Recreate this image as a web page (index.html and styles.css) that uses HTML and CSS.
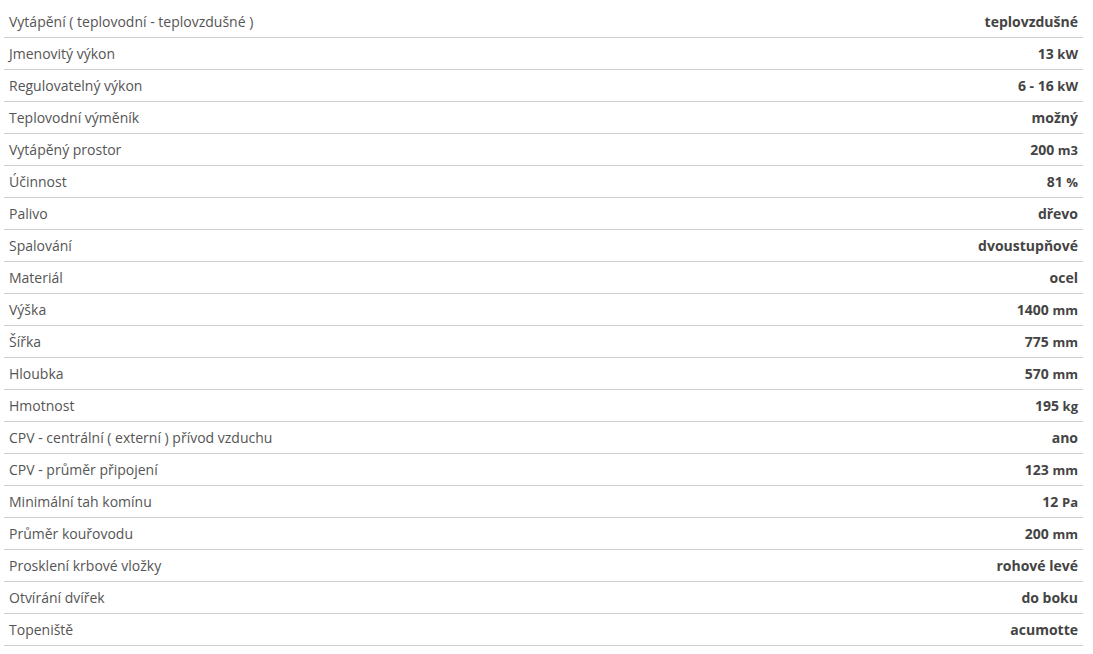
FILE: index.html
```html
<!DOCTYPE html>
<html lang="cs">
<head>
<meta charset="utf-8">
<link rel="stylesheet" href="styles.css">
</head>
<body>
<table class="params">
<tbody>
<tr><td class="name">Vytápění ( teplovodní - teplovzdušné )</td><td class="val">teplovzdušné</td></tr>
<tr><td class="name">Jmenovitý výkon</td><td class="val">13 <span class="unit">kW</span></td></tr>
<tr><td class="name">Regulovatelný výkon</td><td class="val">6 - 16 <span class="unit">kW</span></td></tr>
<tr><td class="name">Teplovodní výměník</td><td class="val">možný</td></tr>
<tr><td class="name">Vytápěný prostor</td><td class="val">200 <span class="unit">m3</span></td></tr>
<tr><td class="name">Účinnost</td><td class="val">81 <span class="unit">%</span></td></tr>
<tr><td class="name">Palivo</td><td class="val">dřevo</td></tr>
<tr><td class="name">Spalování</td><td class="val">dvoustupňové</td></tr>
<tr><td class="name">Materiál</td><td class="val">ocel</td></tr>
<tr><td class="name">Výška</td><td class="val">1400 <span class="unit">mm</span></td></tr>
<tr><td class="name">Šířka</td><td class="val">775 <span class="unit">mm</span></td></tr>
<tr><td class="name">Hloubka</td><td class="val">570 <span class="unit">mm</span></td></tr>
<tr><td class="name">Hmotnost</td><td class="val">195 <span class="unit">kg</span></td></tr>
<tr><td class="name">CPV - centrální ( externí ) přívod vzduchu</td><td class="val">ano</td></tr>
<tr><td class="name">CPV - průměr připojení</td><td class="val">123 <span class="unit">mm</span></td></tr>
<tr><td class="name">Minimální tah komínu</td><td class="val">12 <span class="unit">Pa</span></td></tr>
<tr><td class="name">Průměr kouřovodu</td><td class="val">200 <span class="unit">mm</span></td></tr>
<tr><td class="name">Prosklení krbové vložky</td><td class="val">rohové levé</td></tr>
<tr><td class="name">Otvírání dvířek</td><td class="val">do boku</td></tr>
<tr><td class="name">Topeniště</td><td class="val">acumotte</td></tr>
</tbody>
</table>
</body>
</html>
```
FILE: styles.css
```css
html, body {
  margin: 0;
  background: #fff;
}
body {
  padding: 6px 10px 0 4px;
  font-family: "Open Sans", "Liberation Sans", sans-serif;
  font-size: 14px;
  color: #555;
}
.params {
  width: 1079px;
  border-collapse: collapse;
}
.params td {
  height: 31px;
  padding: 0 5px;
  border-bottom: 1px solid #d0d0d0;
  vertical-align: middle;
  line-height: 20px;
}
.params .name {
  text-align: left;
}
.params .val {
  text-align: right;
  font-weight: 700;
  color: #444;
  white-space: nowrap;
}
.params .unit {
  font-size: 13px;
}
```
